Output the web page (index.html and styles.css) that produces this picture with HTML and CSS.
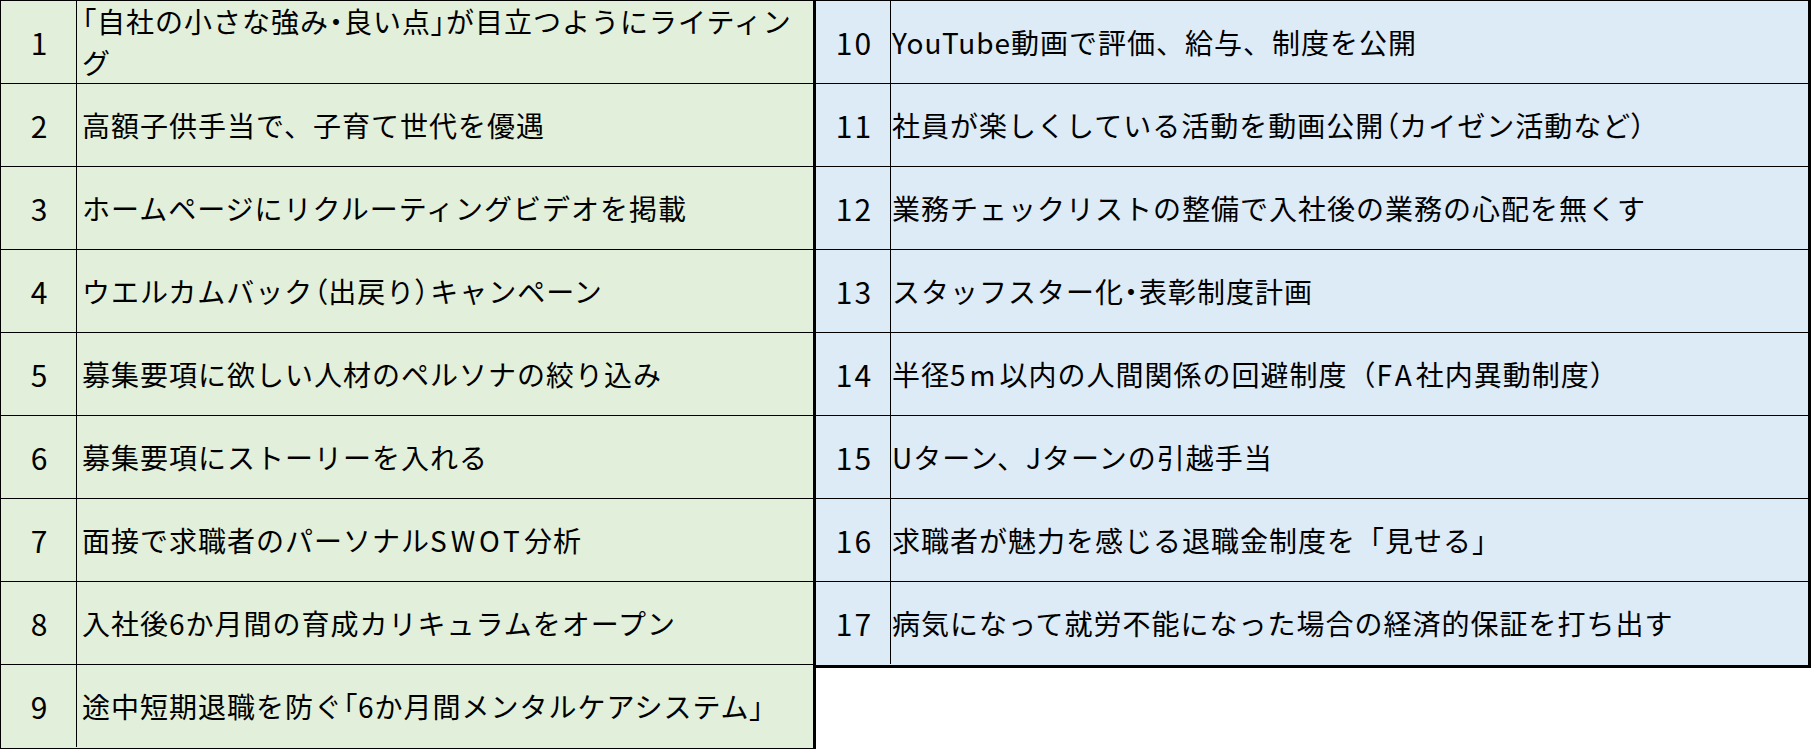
FILE: index.html
```html
<!DOCTYPE html>
<html lang="ja">
<head>
<meta charset="utf-8">
<title>施策一覧</title>
<link rel="stylesheet" href="styles.css">
</head>
<body>
<div class="sheet">
  <div class="tbl green">
    <div class="num">1</div><div class="txt"><p class="t"><span class="hw">「</span>自社の小さな強み<span class="hw">・</span>良い点<span class="hw">」</span>が目立つようにライティン<br>グ</p></div>
    <div class="num">2</div><div class="txt"><p class="t">高額子供手当で、子育て世代を優遇</p></div>
    <div class="num">3</div><div class="txt"><p class="t">ホームページにリクルーティングビデオを掲載</p></div>
    <div class="num">4</div><div class="txt"><p class="t">ウエルカムバック<span class="hw">（</span>出戻り<span class="hw">）</span>キャンペーン</p></div>
    <div class="num">5</div><div class="txt"><p class="t">募集要項に欲しい人材のペルソナの絞り込み</p></div>
    <div class="num">6</div><div class="txt"><p class="t">募集要項にストーリーを入れる</p></div>
    <div class="num">7</div><div class="txt"><p class="t">面接で求職者のパーソナル<span class="wl">SWOT</span>分析</p></div>
    <div class="num">8</div><div class="txt"><p class="t">入社後6か月間の育成カリキュラムをオープン</p></div>
    <div class="num last">9</div><div class="txt last"><p class="t">途中短期退職を防ぐ<span class="hw">「</span>6か月間メンタルケアシステム<span class="hw">」</span></p></div>
  </div>
  <div class="tbl blue">
    <div class="num">10</div><div class="txt"><p class="t">YouTube動画で評価、給与、制度を公開</p></div>
    <div class="num">11</div><div class="txt"><p class="t">社員が楽しくしている活動を動画公開<span class="hw">（</span>カイゼン活動など<span class="hw">）</span></p></div>
    <div class="num">12</div><div class="txt"><p class="t">業務チェックリストの整備で入社後の業務の心配を無くす</p></div>
    <div class="num">13</div><div class="txt"><p class="t">スタッフスター化<span class="hw">・</span>表彰制度計画</p></div>
    <div class="num">14</div><div class="txt"><p class="t">半径<span class="wl">5m</span>以内の人間関係の回避制度（<span class="wl">FA</span>社内異動制度）</p></div>
    <div class="num">15</div><div class="txt"><p class="t">Uターン、Jターンの引越手当</p></div>
    <div class="num">16</div><div class="txt"><p class="t">求職者が魅力を感じる退職金制度を「見せる」</p></div>
    <div class="num last">17</div><div class="txt last"><p class="t">病気になって就労不能になった場合の経済的保証を打ち出す</p></div>
  </div>
</div>
</body>
</html>
```

FILE: styles.css
```css
html, body {
  margin: 0;
  padding: 0;
  background: #ffffff;
}

body {
  font-family: "Noto Sans CJK JP", "Noto Sans", sans-serif;
  color: #000000;
}

.sheet {
  display: flex;
  align-items: flex-start;
  width: 1812px;
}

.tbl {
  display: grid;
  grid-auto-rows: 83px;
  border-top: 1px solid #000;
  border-right: 3px solid #000;
  border-bottom: 3px solid #000;
}

.tbl .last {
  height: 82px;
  border-bottom: none;
}

.green {
  background: #e2efda;
  border-left: 1px solid #000;
  grid-template-columns: 76px 736px;
}

.blue {
  background: #ddebf7;
  grid-template-columns: 75px 917px;
}

.num,
.txt {
  box-sizing: border-box;
  border-bottom: 1px solid #000;
  display: flex;
  align-items: center;
  line-height: 1.2;
}

.num {
  border-right: 1px solid #000;
  justify-content: center;
  font-size: 30px;
  letter-spacing: 2px;
  padding-left: 3px;
}

.txt {
  font-size: 28px;
  letter-spacing: 1px;
  padding-left: 5px;
}

.t {
  margin: 0;
  line-height: 1.45;
}

.blue .txt {
  padding-left: 1px;
}

.hw {
  display: inline-block;
  font-feature-settings: "palt" 1;
}

.wl {
  display: inline-block;
  letter-spacing: 4px;
}
```
